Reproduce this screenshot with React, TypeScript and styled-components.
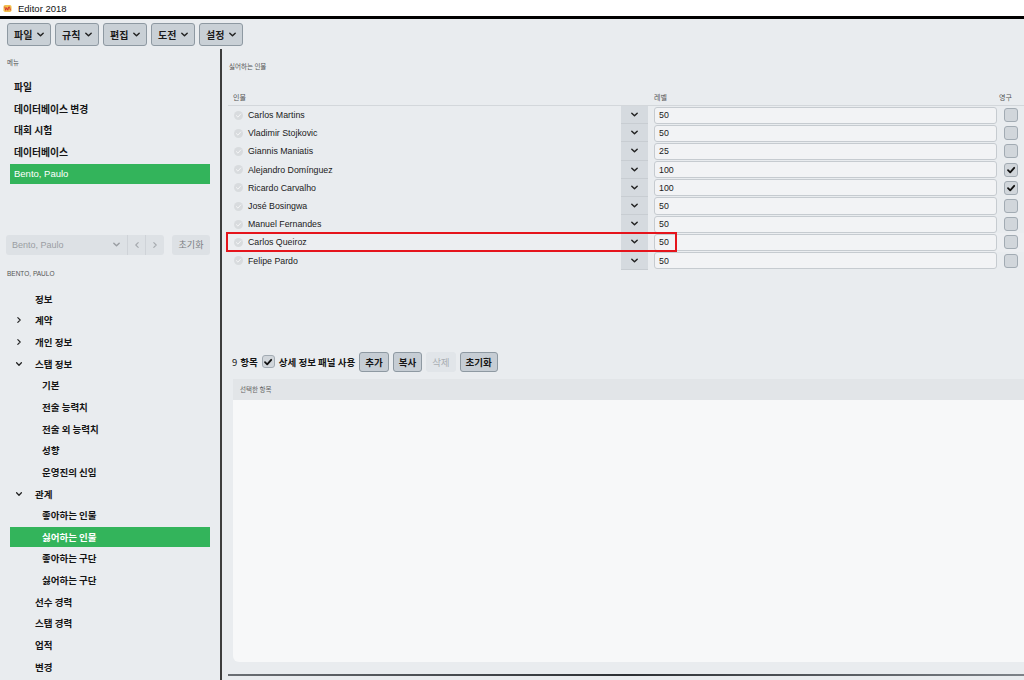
import React from 'react';
import styled, { createGlobalStyle } from 'styled-components';

const GlobalStyle = createGlobalStyle`
  html, body { margin: 0; padding: 0; background: #e9ecef; }
  body { font-family: "Liberation Sans", "Noto Sans CJK KR", sans-serif; }
  #root { width: 1024px; height: 680px; overflow: hidden; }
  * { box-sizing: border-box; }
`;

const KR = `"Noto Sans CJK KR", "Liberation Sans", sans-serif`;
const GREEN = '#33b45b';

const Window = styled.div`
  width: 1024px;
  height: 680px;
  display: flex;
  flex-direction: column;
  background: #e9ecef;
`;

const TitleBar = styled.div`
  height: 16px;
  background: #fff;
  display: flex;
  align-items: center;
  gap: 6px;
  padding-left: 3px;
  font-size: 9.5px;
  color: #111;
  border-bottom: 3px solid #000;
  box-sizing: content-box;
`;

const Toolbar = styled.div`
  height: 30px;
  display: flex;
  align-items: center;
  gap: 4px;
  padding: 0 7px;
`;

const MenuButton = styled.button`
  height: 23px;
  width: 44px;
  display: flex;
  align-items: center;
  justify-content: space-between;
  padding: 0 5px 0 6px;
  background: #c9d0d6;
  border: 1px solid #8e99a2;
  border-radius: 3px;
  font-family: ${KR};
  font-weight: 700;
  font-size: 10px;
  color: #1b1b1b;
`;

const Main = styled.div`
  flex: 1;
  display: flex;
  min-height: 0;
`;

const Sidebar = styled.aside`
  width: 222px;
  border-right: 2px solid #3d3d3d;
  display: flex;
  flex-direction: column;
  padding-top: 8px;
`;

const TinyLabel = styled.div<{ $latin?: boolean; $top?: number }>`
  font-family: ${p => (p.$latin ? `"Liberation Sans", sans-serif` : KR)};
  font-size: 6.5px;
  line-height: 10px;
  height: 10px;
  color: #555;
  padding-left: 7px;
  margin-top: ${p => p.$top ?? 0}px;
`;

const MenuList = styled.div`
  display: flex;
  flex-direction: column;
  gap: 1.7px;
  margin-top: 10px;
`;

const MenuItem = styled.div<{ $active?: boolean }>`
  height: 20px;
  margin: 0 10px;
  padding-left: 4px;
  display: flex;
  align-items: center;
  background: ${p => (p.$active ? GREEN : 'transparent')};
  color: ${p => (p.$active ? '#fff' : '#151515')};
  font-family: ${p => (p.$active ? `"Liberation Sans", sans-serif` : KR)};
  font-weight: ${p => (p.$active ? 400 : 700)};
  font-size: ${p => (p.$active ? '9.5px' : '9.8px')};
`;

const SelectorRow = styled.div`
  margin-top: 51px;
  height: 20px;
  display: flex;
  align-items: stretch;
  padding-left: 6px;
  gap: 8px;
`;

const ComboGroup = styled.div`
  display: flex;
  width: 158px;
  background: #dde1e5;
  border-radius: 3px;
  overflow: hidden;
`;

const ComboText = styled.div`
  flex: 1;
  display: flex;
  align-items: center;
  justify-content: space-between;
  padding: 0 6px;
  font-size: 9px;
  color: #9a9ea3;
  border-right: 1px solid #cfd3d8;
`;

const NavBtn = styled.div<{ $last?: boolean }>`
  width: 18px;
  display: flex;
  align-items: center;
  justify-content: center;
  border-right: ${p => (p.$last ? 'none' : '1px solid #cfd3d8')};
`;

const GhostButton = styled.div`
  width: 38px;
  display: flex;
  align-items: center;
  justify-content: center;
  background: #dde1e5;
  border-radius: 3px;
  font-family: ${KR};
  font-size: 9px;
  color: #7a7e83;
`;

const TreeList = styled.div`
  display: flex;
  flex-direction: column;
  gap: 1.65px;
  margin-top: 10px;
`;

const TreeItem = styled.div<{ $level: number; $active?: boolean }>`
  position: relative;
  height: 20px;
  margin: 0 10px;
  padding-left: ${p => (p.$level === 0 ? 25 : 32)}px;
  display: flex;
  align-items: center;
  background: ${p => (p.$active ? GREEN : 'transparent')};
  color: ${p => (p.$active ? '#fff' : '#151515')};
  font-family: ${KR};
  font-weight: 700;
  font-size: 9.5px;
`;

const Caret = styled.span`
  position: absolute;
  left: 5px;
  top: 6px;
  display: flex;
`;

const Content = styled.section`
  flex: 1;
  display: flex;
  flex-direction: column;
  padding-top: 12px;
  min-width: 0;
`;

const Table = styled.div`
  margin-top: 18px;
  margin-left: 6px;
  display: flex;
  flex-direction: column;
`;

const HeaderRow = styled.div`
  height: 17px;
  display: flex;
  align-items: center;
  border-bottom: 1px solid #d3d7db;
  font-family: ${KR};
  font-size: 7px;
  color: #555;
`;

const HeadCell = styled.div<{ $w?: number; $flex?: boolean; $pl?: number }>`
  ${p => (p.$flex ? 'flex: 1;' : `width: ${p.$w}px;`)}
  padding-left: ${p => p.$pl ?? 0}px;
`;

const Row = styled.div<{ $selected?: boolean }>`
  position: relative;
  height: 18.2px;
  display: flex;
  align-items: stretch;
  background: ${p => (p.$selected ? '#eceef1' : 'transparent')};
`;

const NameCell = styled.div`
  flex: 1;
  display: flex;
  align-items: center;
  gap: 5px;
  padding-left: 6px;
  font-size: 8.8px;
  color: #1a1a1a;
`;

const RowCircle = styled.span`
  width: 9px;
  height: 9px;
  border-radius: 50%;
  background: #d8dbde;
  display: flex;
  align-items: center;
  justify-content: center;
`;

const DropCell = styled.div`
  width: 27px;
  display: flex;
  align-items: center;
  justify-content: center;
  background: #d5dadf;
  border-bottom: 1px solid #c8cdd2;
`;

const LevelInput = styled.div`
  width: 343px;
  margin: 0.5px 0 0.5px 6px;
  display: flex;
  align-items: center;
  padding-left: 4px;
  background: #f2f3f5;
  border: 1px solid #c6cbd0;
  border-radius: 3px;
  font-size: 8.8px;
  color: #1a1a1a;
`;

const CheckCell = styled.div`
  width: 27px;
  display: flex;
  align-items: center;
  justify-content: center;
`;

const Box = styled.span<{ $size?: number }>`
  width: ${p => p.$size ?? 14}px;
  height: ${p => p.$size ?? 14}px;
  border-radius: 3px;
  background: #d1d6db;
  border: 1px solid #a2abb3;
  display: flex;
  align-items: center;
  justify-content: center;
`;

const Highlight = styled.div`
  position: absolute;
  left: -2px;
  top: -1px;
  width: 451px;
  height: 20px;
  border: 2px solid #e5141c;
  pointer-events: none;
`;

const ActionBar = styled.div`
  margin-top: 82px;
  margin-left: 10px;
  height: 20px;
  display: flex;
  align-items: center;
  gap: 4px;
  font-family: ${KR};
  font-weight: 700;
  font-size: 9.5px;
  color: #151515;
`;

const ActionButton = styled.div<{ $disabled?: boolean }>`
  height: 20px;
  padding: 0 5px;
  display: flex;
  align-items: center;
  background: ${p => (p.$disabled ? '#e1e5e9' : '#c6cdd4')};
  border: 1px solid ${p => (p.$disabled ? '#e1e5e9' : '#8e99a2')};
  border-radius: 3px;
  color: ${p => (p.$disabled ? '#a9aeb3' : '#151515')};
  font-weight: ${p => (p.$disabled ? 400 : 700)};
`;

const DetailPanel = styled.div`
  flex: 1;
  margin-top: 7px;
  margin-left: 11px;
  display: flex;
  flex-direction: column;
  background: #f7f8f9;
  border-radius: 0 0 0 6px;
  overflow: hidden;
`;

const DetailHeader = styled.div`
  height: 21px;
  display: flex;
  align-items: center;
  padding-left: 7px;
  background: #e2e5e8;
  font-family: ${KR};
  font-size: 6.5px;
  color: #666;
`;

const BottomRule = styled.div`
  height: 2px;
  margin: 12px 0 4px 6px;
  background: linear-gradient(90deg, #6a6e73, #2c2f33 50%, #7d8288);
`;

const ChevronDown = ({ size = 9, color = '#222' }: { size?: number; color?: string }) => (
  <svg width={size} height={size} viewBox="0 0 10 10">
    <path d="M2 3.5 L5 6.5 L8 3.5" fill="none" stroke={color} strokeWidth="1.6" strokeLinecap="round" strokeLinejoin="round" />
  </svg>
);

const ChevronSide = ({ dir, color = '#222' }: { dir: 'left' | 'right'; color?: string }) => (
  <svg width={8} height={8} viewBox="0 0 10 10">
    <path
      d={dir === 'right' ? 'M3.5 2 L6.5 5 L3.5 8' : 'M6.5 2 L3.5 5 L6.5 8'}
      fill="none"
      stroke={color}
      strokeWidth="1.4"
      strokeLinecap="round"
      strokeLinejoin="round"
    />
  </svg>
);

const Tick = ({ size = 10, color = '#111', width = 1.8 }: { size?: number; color?: string; width?: number }) => (
  <svg width={size} height={size} viewBox="0 0 10 10">
    <path d="M2 5.2 L4.2 7.3 L8.2 2.8" fill="none" stroke={color} strokeWidth={width} strokeLinecap="round" strokeLinejoin="round" />
  </svg>
);

const AppIcon = () => (
  <svg width={9} height={9} viewBox="0 0 10 10">
    <rect x="0.5" y="1" width="9" height="8" rx="2" fill="#f2c14e" />
    <path d="M2 3 L3 7 L4.2 4 L5.4 7 L6.4 3 M7.2 3 L8.2 7" fill="none" stroke="#d62b2b" strokeWidth="1" />
  </svg>
);

const menus = ['파일', '규칙', '편집', '도전', '설정'];
const sideMenu = ['파일', '데이터베이스 변경', '대회 시험', '데이터베이스'];

type Tree = { label: string; level: number; caret?: 'right' | 'down'; active?: boolean };
const tree: Tree[] = [
  { label: '정보', level: 0 },
  { label: '계약', level: 0, caret: 'right' },
  { label: '개인 정보', level: 0, caret: 'right' },
  { label: '스탭 정보', level: 0, caret: 'down' },
  { label: '기본', level: 1 },
  { label: '전술 능력치', level: 1 },
  { label: '전술 외 능력치', level: 1 },
  { label: '성향', level: 1 },
  { label: '운영진의 신임', level: 1 },
  { label: '관계', level: 0, caret: 'down' },
  { label: '좋아하는 인물', level: 1 },
  { label: '싫어하는 인물', level: 1, active: true },
  { label: '좋아하는 구단', level: 1 },
  { label: '싫어하는 구단', level: 1 },
  { label: '선수 경력', level: 0 },
  { label: '스탭 경력', level: 0 },
  { label: '업적', level: 0 },
  { label: '변경', level: 0 },
];

const people = [
  { name: 'Carlos Martins', level: 50, perm: false },
  { name: 'Vladimir Stojkovic', level: 50, perm: false },
  { name: 'Giannis Maniatis', level: 25, perm: false },
  { name: 'Alejandro Domínguez', level: 100, perm: true },
  { name: 'Ricardo Carvalho', level: 100, perm: true },
  { name: 'José Bosingwa', level: 50, perm: false },
  { name: 'Manuel Fernandes', level: 50, perm: false },
  { name: 'Carlos Queiroz', level: 50, perm: false, highlight: true },
  { name: 'Felipe Pardo', level: 50, perm: false },
];

const App: React.FC = () => {
  return (
    <Window>
      <GlobalStyle />
      <TitleBar>
        <AppIcon />
        <span>Editor 2018</span>
      </TitleBar>
      <Toolbar>
        {menus.map(m => (
          <MenuButton key={m}>
            <span>{m}</span>
            <ChevronDown />
          </MenuButton>
        ))}
      </Toolbar>
      <Main>
        <Sidebar>
          <TinyLabel>메뉴</TinyLabel>
          <MenuList>
            {sideMenu.map(m => (
              <MenuItem key={m}>{m}</MenuItem>
            ))}
            <MenuItem $active>Bento, Paulo</MenuItem>
          </MenuList>
          <SelectorRow>
            <ComboGroup>
              <ComboText>
                <span>Bento, Paulo</span>
                <ChevronDown color="#9a9ea3" />
              </ComboText>
              <NavBtn>
                <ChevronSide dir="left" color="#a5a9ae" />
              </NavBtn>
              <NavBtn $last>
                <ChevronSide dir="right" color="#a5a9ae" />
              </NavBtn>
            </ComboGroup>
            <GhostButton>초기화</GhostButton>
          </SelectorRow>
          <TinyLabel $latin $top={14}>BENTO, PAULO</TinyLabel>
          <TreeList>
            {tree.map(t => (
              <TreeItem key={t.label} $level={t.level} $active={t.active}>
                {t.caret && (
                  <Caret>
                    {t.caret === 'down' ? <ChevronDown size={8} color="#222" /> : <ChevronSide dir="right" color="#222" />}
                  </Caret>
                )}
                {t.label}
              </TreeItem>
            ))}
          </TreeList>
        </Sidebar>
        <Content>
          <TinyLabel>싫어하는 인물</TinyLabel>
          <Table>
            <HeaderRow>
              <HeadCell $flex $pl={5}>인물</HeadCell>
              <HeadCell $w={376} $pl={33}>레벨</HeadCell>
              <HeadCell $w={27} $pl={2}>영구</HeadCell>
            </HeaderRow>
            {people.map(p => (
              <Row key={p.name} $selected={p.highlight}>
                <NameCell>
                  <RowCircle>
                    <Tick size={7} color="#f4f5f6" width={1.4} />
                  </RowCircle>
                  {p.name}
                </NameCell>
                <DropCell>
                  <ChevronDown />
                </DropCell>
                <LevelInput>{p.level}</LevelInput>
                <CheckCell>
                  <Box>{p.perm && <Tick />}</Box>
                </CheckCell>
                {p.highlight && <Highlight />}
              </Row>
            ))}
          </Table>
          <ActionBar>
            <span style={{ fontWeight: 400, marginRight: -1 }}>9</span>
            <span>항목</span>
            <Box $size={13}>
              <Tick size={10} />
            </Box>
            <span>상세 정보 패널 사용</span>
            <ActionButton>추가</ActionButton>
            <ActionButton>복사</ActionButton>
            <ActionButton $disabled>삭제</ActionButton>
            <ActionButton>초기화</ActionButton>
          </ActionBar>
          <DetailPanel>
            <DetailHeader>선택한 항목</DetailHeader>
          </DetailPanel>
          <BottomRule />
        </Content>
      </Main>
    </Window>
  );
};

export default App;
